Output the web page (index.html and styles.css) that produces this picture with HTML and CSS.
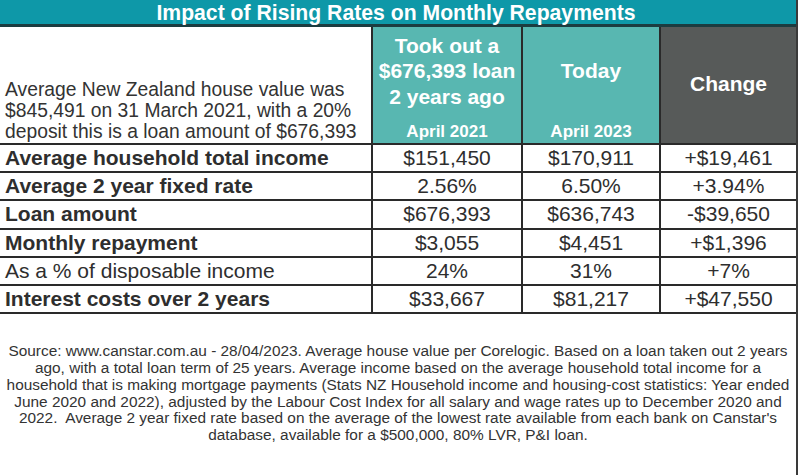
FILE: index.html
```html
<!DOCTYPE html>
<html>
<head>
<meta charset="utf-8">
<link rel="stylesheet" href="styles.css">
</head>
<body>
<div class="page">
  <div class="title">Impact of Rising Rates on Monthly Repayments</div>
  <table class="grid">
    <colgroup>
      <col class="c1"><col class="c2"><col class="c3"><col class="c4">
    </colgroup>
    <tr class="head">
      <td class="intro">Average New Zealand house value was $845,491 on 31 March 2021, with a 20% deposit this is a loan amount of $676,393</td>
      <td class="teal"><div class="hcol"><div class="big">Took out a<br>$676,393 loan<br>2 years ago</div><div class="small">April 2021</div></div></td>
      <td class="teal"><div class="hcol"><div class="big">Today</div><div class="small">April 2023</div></div></td>
      <td class="grey"><div class="big">Change</div></td>
    </tr>
    <tr><td class="lbl">Average household total income</td><td>$151,450</td><td>$170,911</td><td>+$19,461</td></tr>
    <tr><td class="lbl">Average 2 year fixed rate</td><td>2.56%</td><td>6.50%</td><td>+3.94%</td></tr>
    <tr><td class="lbl">Loan amount</td><td>$676,393</td><td>$636,743</td><td>-$39,650</td></tr>
    <tr><td class="lbl">Monthly repayment</td><td>$3,055</td><td>$4,451</td><td>+$1,396</td></tr>
    <tr><td class="lbl plain">As a % of disposable income</td><td>24%</td><td>31%</td><td>+7%</td></tr>
    <tr><td class="lbl">Interest costs over 2 years</td><td>$33,667</td><td>$81,217</td><td>+$47,550</td></tr>
  </table>
  <div class="note">Source: www.canstar.com.au - 28/04/2023. Average house value per Corelogic. Based on a loan taken out 2 years ago, with a total loan term of 25 years. Average income based on the average household total income for a household that is making mortgage payments (Stats NZ Household income and housing-cost statistics: Year ended June 2020 and 2022), adjusted by the Labour Cost Index for all salary and wage rates up to December 2020 and 2022.&nbsp; Average 2 year fixed rate based on the average of the lowest rate available from each bank on Canstar's database, available for a $500,000, 80% LVR, P&amp;I loan.</div>
</div>
</body>
</html>
```
FILE: styles.css
```css
html, body {
  margin: 0;
  padding: 0;
  background: #ffffff;
}
body {
  font-family: "Liberation Sans", Arial, sans-serif;
  color: #222;
}
.page {
  width: 798px;
  height: 475px;
  border-right: 2px solid #3a3a3a;
  box-sizing: border-box;
  display: flex;
  flex-direction: column;
}
.title {
  height: 24px;
  background: #0e98a8;
  border-bottom: 3px solid #1c3c40;
  color: #fff;
  font-weight: bold;
  font-size: 21.2px;
  line-height: 25px;
  text-align: center;
  padding-right: 4px;
  white-space: nowrap;
}
.grid {
  border-collapse: collapse;
  table-layout: fixed;
  width: 796px;
}
.c1 { width: 372px; }
.c2 { width: 150px; }
.c3 { width: 138px; }
.c4 { width: 136px; }
.grid td {
  border: 2px solid #2a2a2a;
  height: 26.2px;
  padding: 0;
  text-align: center;
  font-size: 21px;
  line-height: 22px;
  color: #2e2e2e;
  white-space: nowrap;
}
.grid tr td:first-child { border-left: none; }
.grid tr td:last-child { border-right: none; }
.grid tr.head td {
  border-top: none;
  height: 115px;
  vertical-align: middle;
}
.grid tr.head td.intro {
  text-align: left;
  vertical-align: bottom;
  white-space: normal;
  font-size: 19.3px;
  line-height: 21px;
  padding: 0 0 1px 5px;
  color: #333;
}
.grid td.lbl {
  text-align: left;
  font-weight: bold;
  padding-left: 5px;
  font-size: 21px;
}
.grid td.lbl.plain { font-weight: normal; }
.teal { background: #58b7b1; }
.grey { background: #575a59; }
.hcol {
  height: 115px;
  display: flex;
  flex-direction: column;
  align-items: center;
  padding: 0 0 1px;
  box-sizing: border-box;
  color: #fff;
}
.big {
  color: #fff;
  font-weight: bold;
  font-size: 21px;
  line-height: 25.5px;
  flex: 1;
  display: flex;
  align-items: center;
  justify-content: center;
  text-align: center;
}
.hcol .big { padding-bottom: 7px; }
.grey .big { padding-bottom: 2px; }
.small {
  color: #fff;
  font-weight: bold;
  font-size: 17px;
  line-height: 20px;
}
.note {
  flex: 1;
  padding: 29px 2px 0 2px;
  text-align: center;
  font-size: 15.4px;
  line-height: 16.8px;
  color: #333;
}
```
